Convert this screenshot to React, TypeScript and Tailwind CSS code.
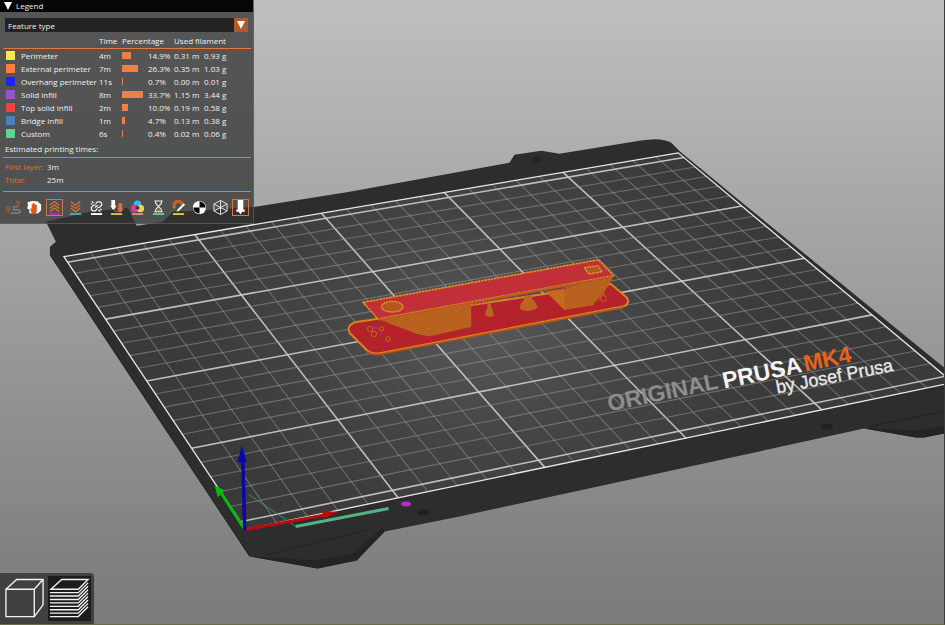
import React from "react";

type Feature = {
  name: string;
  swatch: string;
  time: string;
  share: number;
  length: string;
  weight: string;
};

const features: Feature[] = [
  { name: "Perimeter", swatch: "bg-[#ffe64d]", time: "4m", share: 14.9, length: "0.31 m", weight: "0.93 g" },
  { name: "External perimeter", swatch: "bg-[#ff7d38]", time: "7m", share: 26.3, length: "0.35 m", weight: "1.03 g" },
  { name: "Overhang perimeter", swatch: "bg-[#1f1fff]", time: "11s", share: 0.7, length: "0.00 m", weight: "0.01 g" },
  { name: "Solid infill", swatch: "bg-[#9654cc]", time: "8m", share: 33.7, length: "1.15 m", weight: "3.44 g" },
  { name: "Top solid infill", swatch: "bg-[#f04040]", time: "2m", share: 10.0, length: "0.19 m", weight: "0.58 g" },
  { name: "Bridge infill", swatch: "bg-[#4d80ba]", time: "1m", share: 4.7, length: "0.13 m", weight: "0.38 g" },
  { name: "Custom", swatch: "bg-[#5ed194]", time: "6s", share: 0.4, length: "0.02 m", weight: "0.06 g" },
];

const BED_W = 250;
const BED_D = 210;

type Pt = [number, number];
const backLeft: Pt = [64, 257];
const backRight: Pt = [679, 153];
const frontLeft: Pt = [246, 530];
const frontRight: Pt = [954, 383];

// Perspective mapping from bed millimetres to viewport pixels.
function makeProjection(p0: Pt, p1: Pt, p2: Pt, p3: Pt) {
  const dx1 = p1[0] - p2[0], dx2 = p3[0] - p2[0];
  const dy1 = p1[1] - p2[1], dy2 = p3[1] - p2[1];
  const sx = p0[0] - p1[0] + p2[0] - p3[0];
  const sy = p0[1] - p1[1] + p2[1] - p3[1];
  const det = dx1 * dy2 - dx2 * dy1;
  const g = (sx * dy2 - dx2 * sy) / det;
  const h = (dx1 * sy - sx * dy1) / det;
  const a = p1[0] - p0[0] + g * p1[0], b = p3[0] - p0[0] + h * p3[0];
  const d = p1[1] - p0[1] + g * p1[1], e = p3[1] - p0[1] + h * p3[1];
  return (x: number, y: number): Pt => {
    const u = x / BED_W, v = y / BED_D;
    const w = g * u + h * v + 1;
    return [(a * u + b * v + p0[0]) / w, (d * u + e * v + p0[1]) / w];
  };
}

const project = makeProjection(frontLeft, frontRight, backRight, backLeft);

function BedLine({ from, to, major }: { from: Pt; to: Pt; major: boolean }) {
  const [x1, y1] = project(...from);
  const [x2, y2] = project(...to);
  return (
    <line x1={x1} y1={y1} x2={x2} y2={y2} stroke={major ? "#cccccc" : "#969696"}
      strokeWidth={major ? 1.6 : 1.1} strokeOpacity={major ? 0.9 : 0.55} />
  );
}

function Scene() {
  const columns = Array.from({ length: 24 }, (_, i) => (i + 1) * 10);
  const rows = Array.from({ length: 21 }, (_, i) => i * 10 + 5);
  const corners = [backLeft, backRight, frontRight, frontLeft].map((p) => p.join(",")).join(" ");
  return (
    <svg className="absolute inset-0 h-full w-full" viewBox="0 0 945 625" preserveAspectRatio="xMinYMin slice" role="img" aria-label="Sliced model on print bed">
      <defs>
        <radialGradient id="plate" gradientUnits="userSpaceOnUse" cx="480" cy="330" r="300" gradientTransform="translate(0 100) scale(1 0.7)">
          <stop offset="0" stopColor="#585858" />
          <stop offset="0.5" stopColor="#454545" />
          <stop offset="1" stopColor="#3a3a3a" />
        </radialGradient>
        <pattern id="redFill" width="5" height="5" patternUnits="userSpaceOnUse" patternTransform="rotate(55)">
          <rect width="5" height="5" fill="#c4242f" />
          <rect width="5" height="2" fill="#9c2022" />
        </pattern>
        <pattern id="wall" width="5" height="5" patternUnits="userSpaceOnUse" patternTransform="rotate(-10)">
          <rect width="5" height="5" fill="#c26a20" />
          <rect width="5" height="2" fill="#a9541d" />
        </pattern>
      </defs>

      <path fill="#2d2d2d" d="M46 222L90 212L128 208L137 226L163 222L173 212L213 210L256 207L350 192L510 163L515 155L542 151L560 154L640 141Q662 137 672 143L681 152L743 203L945 368V434L925 438H917L865 429L723 460L460 517L385 532L357 561L318 569L250 557L50 255V247L56 242Z" />
      <path fill="#242424" d="M534 157l7 -1v6l-7 1zM250 557L318 561L355 553L383 528L385 532L357 561L318 569ZM865 429L920 431L945 426V434L925 438H917Z" />
      <path fill="none" stroke="#202020" d="M268 555L366 531M870 427L945 412M50 255L250 557" />
      <ellipse cx="424" cy="513" rx="6" ry="3" fill="#202020" />
      <ellipse cx="828" cy="427" rx="6" ry="3" fill="#202020" />

      <polygon points={corners} fill="url(#plate)" />
      {columns.map((x) => <BedLine key={`c${x}`} from={[x, 0]} to={[x, BED_D]} major={x % 50 === 0} />)}
      {rows.map((y) => <BedLine key={`r${y}`} from={[0, y]} to={[BED_W, y]} major={y % 50 === 5} />)}
      <polygon points={corners} fill="none" stroke="#e8e8e8" strokeWidth="1.3" />

      <g fontFamily="'Liberation Sans', Arial, sans-serif" fontWeight="bold">
        <text transform="translate(610 412) rotate(-12)" fontSize="23" fill="#8d8d8d">ORIGINAL</text>
        <text transform="translate(725 389) rotate(-12)" fontSize="23" fill="#f4f4f4">PRUSA</text>
        <text transform="translate(806 372) rotate(-12)" fontSize="23" fill="#e8641b">MK4</text>
        <text transform="translate(778 394) rotate(-11)" fontSize="18" fontWeight="normal" fill="#e6e6e6" stroke="#e6e6e6" strokeWidth="0.4">by Josef Prusa</text>
      </g>

      <g transform="translate(330 240) scale(0.33333)">
        <path d="M75 248L845 133L893 174Q902 192 884 200L155 340Q128 345 112 332L60 280Q50 258 75 248Z" fill="url(#redFill)" stroke="#d9821f" strokeWidth="6" strokeLinejoin="round" />
        <path d="M112 337Q130 348 155 343L884 203" fill="none" stroke="#b4541a" strokeWidth="5" />
        <g fill="none" stroke="#c9651d" strokeWidth="3">
          <circle cx="122" cy="268" r="8" /><circle cx="133" cy="283" r="8" /><circle cx="156" cy="268" r="6" /><circle cx="175" cy="298" r="7" />
          <circle cx="822" cy="176" r="9" /><circle cx="820" cy="160" r="5" /><path d="M808 182l8-12" />
        </g>
        <path d="M128 262l16 4M150 284l8-2" stroke="#9b30b8" strokeWidth="5" />
        <path d="M145 238L425 190V262L300 290L262 283Z" fill="url(#wall)" />
        <path d="M650 156L853 110L828 152L790 197L705 211Z" fill="url(#wall)" />
        <path d="M650 156L706 145V211Z" fill="#c46a20" />
        <path d="M467 226Q468 212 474 204Q472 192 480 190Q486 194 486 204Q493 214 493 228Q481 236 467 226Z" fill="#bd6420" />
        <path d="M571 208Q572 192 583 182Q582 170 592 166H604Q610 172 610 180Q622 190 624 205Q598 222 571 208Z" fill="#bd6420" />
        <path d="M430 193L648 152L708 146V152" fill="none" stroke="#78306f" strokeWidth="4" strokeDasharray="7 4" />
        <path d="M100 188L807 60L853 108L145 238Z" fill="#c12f38" stroke="#e29024" strokeWidth="5" strokeDasharray="8 2" strokeLinejoin="round" />
        <path d="M145 238L853 108L850 116L146 243Z" fill="#ba5b1c" />
        <ellipse cx="188" cy="201" rx="32" ry="16" fill="#b3561f" stroke="#dfa025" strokeWidth="4" strokeDasharray="6 2" />
        <path d="M765 84L806 78L818 96L778 103Z" fill="#b3561f" stroke="#dfa025" strokeWidth="4" strokeDasharray="6 2" />
      </g>

      <path d="M249 495L296 527" stroke="#3f8f6b" fill="none" />
      <path d="M296 527L389 509" stroke="#55b383" strokeWidth="3" fill="none" />
      <ellipse cx="406.500" cy="504.500" rx="5" ry="2.500" fill="#b42fc0" />
      <path d="M246 530L328 515" stroke="#ba0b0b" strokeWidth="3" />
      <path d="M322 511L338 512.500L324 519Z" fill="#ba0b0b" />
      <path d="M245 530L221 493" stroke="#0cb90c" strokeWidth="3" />
      <path d="M215 486L225 491L218 498Z" fill="#0cb90c" />
      <path d="M245 531L243 458" stroke="#0808a8" strokeWidth="3.500" />
      <path d="M242 446L247 462Q243 465 238 462Z" fill="#0808a8" />
    </svg>
  );
}

const O = "#e0702f";

const tools: { label: string; active?: boolean; underline?: string; art: React.ReactNode }[] = [
  {
    label: "Travel",
    art: (
      <g fill="none" stroke="#8a8a8a" strokeWidth="1.400">
        <path d="M5 14h8.500a1.800 1.800 0 0 0 0-3.500H9a1.800 1.800 0 0 1 0-3.500h4" />
        <circle cx="2.500" cy="8.500" r="1.800" stroke="#a85a33" /><path d="M2.500 10.500v3" stroke="#a85a33" />
        <circle cx="13" cy="2.500" r="1.600" stroke="#a85a33" /><path d="M13 4v2.500" stroke="#a85a33" />
      </g>
    ),
  },
  {
    label: "Wipe",
    art: (
      <g>
        <path d="M.5 2.500l5-1.500 6 .5 1 1.500 2.500 1.500L15 11l-3 3-4.500.5-5-.5V10L0 9l1-3z" fill="#fff" />
        <path d="M5 14L3.500 9.500l.5-1 1 .8V4.500h1.200V3h1.400v1H9v1.200h1.500V12L9 15H6z" fill="#e0591b" />
      </g>
    ),
  },
  {
    label: "Retractions", active: true, underline: "#c21fc2",
    art: <g fill="none" stroke={O} strokeWidth="1.300"><path d="M3 5.500L8 1.500l5 4M3 9L8 5l5 4M3 12.500l5-4 5 4" /></g>,
  },
  {
    label: "Deretractions", underline: "#4aa8bd",
    art: <g fill="none" stroke={O} strokeWidth="1.300"><path d="M3 1.500l5 4 5-4M3 5l5 4 5-4M3 8.500l5 4 5-4" /></g>,
  },
  {
    label: "Seams", underline: "#ffffff",
    art: (
      <g fill="none" stroke="#eee" strokeWidth="1.300">
        <path d="M7 4l2-2h3l1.500 1.500v2L11 8 9 8M9 9l-2 2.500H4L2.500 10V8L5 5.500h2M6.500 8L9.500 5.500M3 1.500l2 1.500M2 4.500h1.500M13.500 11l-2-1.500M12 12.500L10 11" />
      </g>
    ),
  },
  {
    label: "Tool changes", underline: "#d5c24a",
    art: (
      <g>
        <path d="M2.500 0h4v6H8L5.500 10H4L1.500 6h1z" fill="#fff" />
        <path d="M10 3.500h4v5.500h1.500L13 13h-2L8.500 9H10z" fill={O} /><path d="M5.500 11q2 1.500 5 1" stroke={O} fill="none" />
      </g>
    ),
  },
  {
    label: "Color changes", underline: "#e08a82",
    art: <g><circle cx="8" cy="4.500" r="4" fill="#3fb5ea" /><circle cx="5" cy="9" r="4" fill="#e7368f" /><circle cx="11" cy="9" r="4" fill="#f2d43c" /><path d="M8 5.500l2.500 3L8 11 5.500 8.500z" fill="#3a3a50" /></g>,
  },
  {
    label: "Pause prints", underline: "#49d68a",
    art: <g fill="none" stroke="#eee" strokeWidth="1.200"><path d="M3.500 1h9M3.500 12.500h9M5 1.500v2L8 7l3-3.500v-2M5 12v-2L8 7l3 3v2" /><path d="M6 11.500L8 9l2 2.500z" fill={O} stroke="none" /></g>,
  },
  {
    label: "Custom G-codes", underline: "#dccb3b",
    art: <g fill="none"><path d="M12 4.500A4.500 4.500 0 1 0 4.500 9" stroke="#e0641f" strokeWidth="3.400" strokeDasharray="2.600 0.500" /><path d="M6 12.500l1-2.500 6.500-6.500L15 5l-6.500 6.500z" fill="#fff" /></g>,
  },
  {
    label: "Center of gravity",
    art: <g><circle cx="8" cy="8" r="7" fill="#fff" /><path d="M8 8V1.500A6.500 6.500 0 0 1 14.500 8zM8 8v6.500A6.500 6.500 0 0 1 1.500 8z" fill="#000" /></g>,
  },
  {
    label: "Shells",
    art: <g fill="none" stroke="#e8e8e8"><path d="M8 .5l7 3.800v7.400L8 15.500l-7-3.800V4.300zM8 .5v15M1 4.300l14 7.400M15 4.300L1 11.700" /></g>,
  },
  {
    label: "Tool marker", active: true,
    art: <path d="M5 0h6v10h1.500v2.500h-2.500L8 15.500l-2-3H3.500V10H5z" fill="#fff" />,
  },
];

function Rule() {
  return <hr className="h-px border-0 bg-[#e07a40]" />;
}

function Legend() {
  return (
    <section aria-label="Legend" className="relative w-[254px] border-r border-b border-[#6a6a6a]/60 bg-[#333333]/75 text-[8px] leading-[13px] text-[#f0f0f0]">
      <button className="flex h-3 w-full items-center gap-1 bg-[#060606] pl-1 text-left leading-3">
        <svg className="h-2 w-2" viewBox="0 0 8 8" aria-hidden="true"><path d="M0 0h8L4 8z" fill="#fff" /></svg>
        Legend
      </button>

      <div className="pt-[6px] pr-[2px] pl-[3px]">
        <div className="relative mr-[3px] ml-[2px]">
          <select aria-label="View type" defaultValue="feature" className="block h-[14px] w-full appearance-none bg-[#232323] pl-[3px] text-[8px] leading-[13px] text-[#f0f0f0]">
            <option value="feature">Feature type</option>
          </select>
          <span className="pointer-events-none absolute inset-y-0 right-0 flex w-[14px] items-center justify-center bg-[#ad5b2e]">
            <svg className="h-2 w-2" viewBox="0 0 8 8" aria-hidden="true"><path d="M0 0h8L4 8z" fill="#fff" /></svg>
          </span>
        </div>

        <table className="mt-px w-full table-fixed border-collapse text-left">
          <colgroup>
            <col className="w-[18px]" />
            <col className="w-[78px]" />
            <col className="w-[23px]" />
            <col className="w-[26px]" />
            <col className="w-[26px]" />
            <col className="w-[30px]" />
            <col />
          </colgroup>
          <thead>
            <tr className="h-[15px] border-b border-[#e07a40]">
              <td colSpan={2} className="p-0" />
              <th className="p-0 font-normal">Time</th>
              <th colSpan={2} className="p-0 font-normal">Percentage</th>
              <th colSpan={2} className="p-0 font-normal">Used filament</th>
            </tr>
          </thead>
          <tbody>
            {features.map((f) => (
              <tr key={f.name} className="h-[13px]">
                <td className="p-0"><span className={`ml-[3px] block h-[9px] w-[9px] ${f.swatch}`} /></td>
                <td className="whitespace-nowrap p-0">{f.name}</td>
                <td className="p-0">{f.time}</td>
                <td className="p-0"><span className="block h-[7px] min-w-px bg-[#ea8148]" style={{ width: `${(f.share / 33.7) * 80}%` }} /></td>
                <td className="p-0">{f.share.toFixed(1)}%</td>
                <td className="whitespace-nowrap p-0">{f.length}</td>
                <td className="whitespace-nowrap p-0">{f.weight}</td>
              </tr>
            ))}
          </tbody>
        </table>

        <p className="mt-[2px] mb-[2px] pl-[2px]">Estimated printing times:</p>
        <Rule />
        <dl className="grid grid-cols-[42px_1fr] pt-[2px] pb-[5px] pl-[2px]">
          <dt className="text-[#d9743c]">First layer:</dt>
          <dd>3m</dd>
          <dt className="text-[#d9743c]">Total:</dt>
          <dd>25m</dd>
        </dl>
        <Rule />

        <div className="flex py-[7px]">
          {tools.map((t) => (
            <button key={t.label} aria-label={t.label} aria-pressed={!!t.active} className="flex flex-1 justify-center">
              <svg className={t.active ? "h-[17px] w-[17px] border border-[#d9743c]" : "h-[17px] w-[17px] border border-transparent"} viewBox="0 0 16 16">
                {t.art}
                {t.underline && <rect x="2" y="14" width="12" height="2" fill={t.underline} />}
              </svg>
            </button>
          ))}
        </div>
      </div>
    </section>
  );
}

function ViewToolbar() {
  return (
    <nav aria-label="View mode" className="relative flex w-[94px] gap-0.5 rounded-tr bg-[#404040] p-[3px]">
      <button aria-label="3D editor view" className="flex-1">
        <svg className="h-[45px] w-full" viewBox="0 0 44 45" fill="none" stroke="#f2f2f2" strokeWidth="1.400">
          <path d="M3 13H32V41H3ZM3 13L14 3H41V29L32 41M32 13L41 3" />
        </svg>
      </button>
      <button aria-label="Preview" aria-pressed="true" className="flex-1 bg-[#1c1c1c]">
        <svg className="h-[45px] w-full" viewBox="0 0 44 45" fill="none" stroke="#f2f2f2" strokeWidth="1.400">
          <path d="M3 13H31L41 3H14Z" />
          {Array.from({ length: 8 }, (_, i) => {
            const y = 16.5 + i * 3.5;
            return <path key={i} d={`M2 ${y}H31L41 ${y - 10}`} />;
          })}
        </svg>
      </button>
    </nav>
  );
}

export default function App() {
  return (
    <main className="relative flex min-h-screen flex-col items-start justify-between overflow-hidden border-r border-b border-r-[#3c3c3c] border-b-[#6b6b45] bg-linear-to-b from-[#bfbfbf] to-[#7a7a7a] font-['Open_Sans','Noto_Sans',sans-serif]">
      <Scene />
      <Legend />
      <ViewToolbar />
    </main>
  );
}
